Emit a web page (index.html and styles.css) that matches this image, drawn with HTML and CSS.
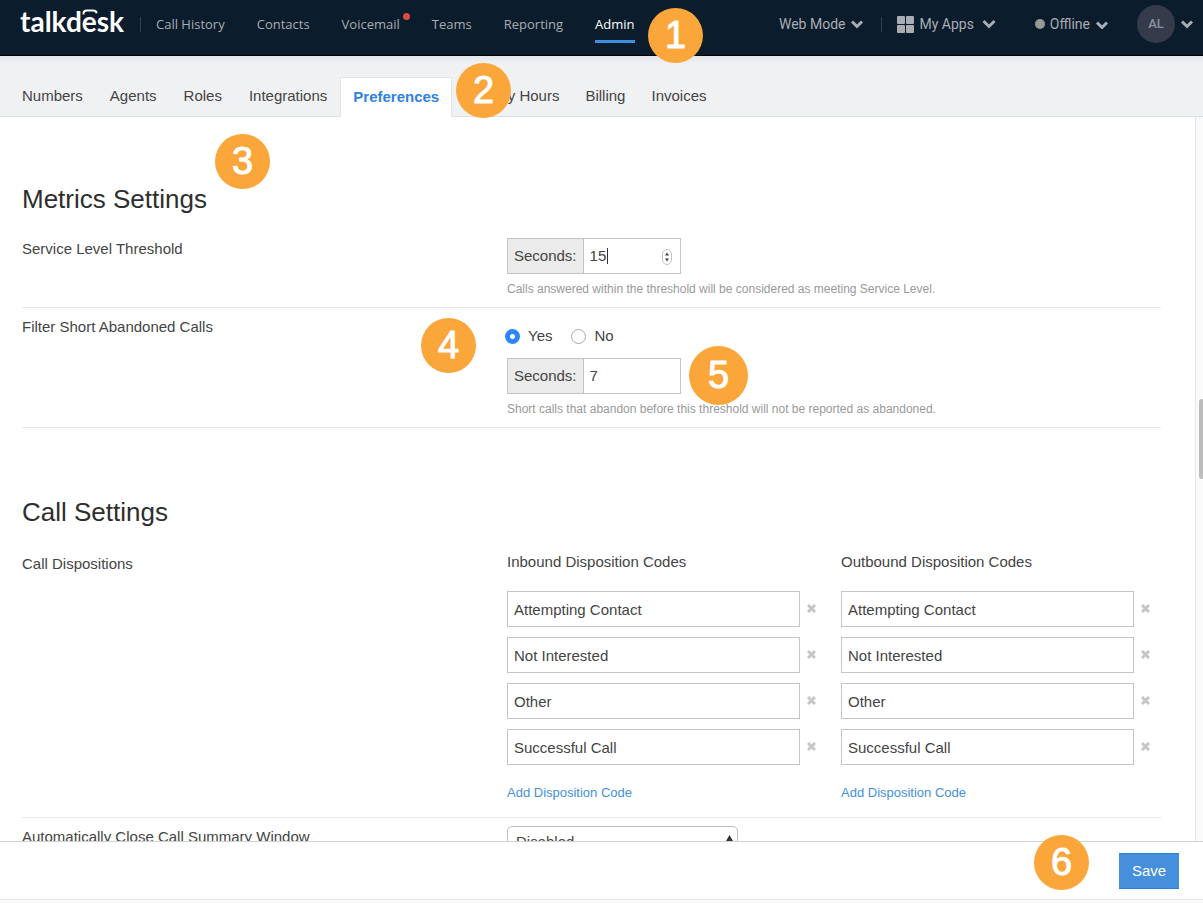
FILE: index.html
```html
<!DOCTYPE html>
<html lang="en">
<head>
    <meta charset="UTF-8">
    <meta name="viewport" content="width=device-width, initial-scale=1.0">
    <title>Talkdesk - Preferences</title>
    <link rel="stylesheet" href="styles.css">
</head>
<body>

<header class="topbar">
    <a class="logo" href="#">talkdesk
        <svg class="logo-arc" width="16" height="7" viewBox="0 0 16 7"><path d="M1.5 5.5V4.2Q1.5 1.5 5 1.5H11Q14.5 1.5 14.5 4.2" fill="none" stroke="#fff" stroke-width="2"/></svg>
    </a>
    <span class="divider"></span>
    <nav class="main-nav">
        <a href="#">Call History</a>
        <a href="#">Contacts</a>
        <a href="#" class="has-dot">Voicemail</a>
        <a href="#">Teams</a>
        <a href="#">Reporting</a>
        <a href="#" class="active">Admin</a>
    </nav>
    <div class="tools">
        <button class="tool" type="button">Web Mode
            <svg class="chevron" width="14" height="10" viewBox="0 0 14 10"><path d="M2 2.5l5 5 5-5"/></svg>
        </button>
        <span class="divider"></span>
        <button class="tool tool-apps" type="button">
            <svg width="17" height="17" viewBox="0 0 17 17" fill="#a9adb3"><rect width="8" height="8" rx="1"/><rect x="9" width="8" height="8" rx="1"/><rect y="9" width="8" height="8" rx="1"/><rect x="9" y="9" width="8" height="8" rx="1"/></svg>
            My Apps
            <svg class="chevron" width="14" height="10" viewBox="0 0 14 10"><path d="M1.500 2l5.500 5.500 5.500-5.500"/></svg>
        </button>
        <button class="tool tool-status" type="button">
            <span class="status-dot"></span>
            Offline
            <svg class="chevron" width="14" height="10" viewBox="0 0 14 10"><path d="M2 3.5l5 5 5-5"/></svg>
        </button>
        <button class="tool tool-user" type="button">
            <span class="avatar">AL</span>
            <svg class="chevron" width="14" height="10" viewBox="0 0 14 10"><path d="M2 2.5l5 5 5-5"/></svg>
        </button>
    </div>
</header>

<nav class="tabs">
    <a href="#">Numbers</a>
    <a href="#">Agents</a>
    <a href="#">Roles</a>
    <a href="#">Integrations</a>
    <a href="#" class="active">Preferences</a>
    <a href="#">Holiday Hours</a>
    <a href="#">Billing</a>
    <a href="#">Invoices</a>
</nav>

<div class="page">
    <main class="content">
        <h2>Metrics Settings</h2>
        <section class="row">
            <label class="row-label" for="threshold">Service Level Threshold</label>
            <div>
                <div class="seconds">
                    <span class="addon">Seconds:</span>
                    <input id="threshold" type="number" value="15">
                    <span class="caret"></span>
                    <svg class="spinner" width="10" height="16" viewBox="0 0 10 16"><rect x=".5" y=".5" width="9" height="15" rx="4.5" fill="#fff" stroke="#c4c4c4"/><path d="M3 6.5L5 3.5l2 3zM3 9.500l2 3 2-3z" fill="#444"/></svg>
                </div>
                <p class="help">Calls answered within the threshold will be considered as meeting Service Level.</p>
            </div>
        </section>
        <section class="row">
            <label class="row-label" for="short-calls">Filter Short Abandoned Calls</label>
            <div>
                <div class="radios">
                    <label><input type="radio" name="filter" checked>Yes</label>
                    <label><input type="radio" name="filter">No</label>
                </div>
                <div class="seconds">
                    <span class="addon">Seconds:</span>
                    <input id="short-calls" type="number" value="7">
                </div>
                <p class="help">Short calls that abandon before this threshold will not be reported as abandoned.</p>
            </div>
        </section>

        <h2 class="next">Call Settings</h2>
        <section class="row row-codes">
            <span class="row-label">Call Dispositions</span>
            <div class="codes">
                <div class="code-list">
                    <h3>Inbound Disposition Codes</h3>
                    <div class="code"><input type="text" aria-label="Inbound code 1" value="Attempting Contact"><button type="button" aria-label="Remove"><svg width="9" height="9" viewBox="0 0 9 9"><path d="M1 1l7 7M8 1L1 8"/></svg></button></div>
                    <div class="code"><input type="text" aria-label="Inbound code 2" value="Not Interested"><button type="button" aria-label="Remove"><svg width="9" height="9" viewBox="0 0 9 9"><path d="M1 1l7 7M8 1L1 8"/></svg></button></div>
                    <div class="code"><input type="text" aria-label="Inbound code 3" value="Other"><button type="button" aria-label="Remove"><svg width="9" height="9" viewBox="0 0 9 9"><path d="M1 1l7 7M8 1L1 8"/></svg></button></div>
                    <div class="code"><input type="text" aria-label="Inbound code 4" value="Successful Call"><button type="button" aria-label="Remove"><svg width="9" height="9" viewBox="0 0 9 9"><path d="M1 1l7 7M8 1L1 8"/></svg></button></div>
                    <a class="add" href="#">Add Disposition Code</a>
                </div>
                <div class="code-list">
                    <h3>Outbound Disposition Codes</h3>
                    <div class="code"><input type="text" aria-label="Outbound code 1" value="Attempting Contact"><button type="button" aria-label="Remove"><svg width="9" height="9" viewBox="0 0 9 9"><path d="M1 1l7 7M8 1L1 8"/></svg></button></div>
                    <div class="code"><input type="text" aria-label="Outbound code 2" value="Not Interested"><button type="button" aria-label="Remove"><svg width="9" height="9" viewBox="0 0 9 9"><path d="M1 1l7 7M8 1L1 8"/></svg></button></div>
                    <div class="code"><input type="text" aria-label="Outbound code 3" value="Other"><button type="button" aria-label="Remove"><svg width="9" height="9" viewBox="0 0 9 9"><path d="M1 1l7 7M8 1L1 8"/></svg></button></div>
                    <div class="code"><input type="text" aria-label="Outbound code 4" value="Successful Call"><button type="button" aria-label="Remove"><svg width="9" height="9" viewBox="0 0 9 9"><path d="M1 1l7 7M8 1L1 8"/></svg></button></div>
                    <a class="add" href="#">Add Disposition Code</a>
                </div>
            </div>
        </section>
        <section class="row">
            <label class="row-label" for="auto-close">Automatically Close Call Summary Window</label>
            <div class="select-wrap">
                <select id="auto-close"><option>Disabled</option></select>
                <svg class="arrows" width="7" height="15" viewBox="0 0 7 15" fill="#333"><path d="M0 6L3.500 0 7 6zM0 9l3.500 6L7 9z"/></svg>
            </div>
        </section>
    </main>
    <div class="track"><span class="thumb"></span></div>
</div>

<footer class="actions">
    <button class="save" type="button">Save</button>
</footer>

<!-- step markers -->
<span class="step step-1">1</span>
<span class="step step-2">2</span>
<span class="step step-3">3</span>
<span class="step step-4">4</span>
<span class="step step-5">5</span>
<span class="step step-6">6</span>

</body>
</html>
```
FILE: styles.css
```css
* {
    box-sizing: border-box;
}
body {
    margin: 0;
    height: 100vh;
    display: flex;
    flex-direction: column;
    position: relative;
    overflow: hidden;
    background: #fff;
    color: #444;
    font: 15px/22px "Liberation Sans", Arial, sans-serif;
}
a {
    text-decoration: none;
    color: inherit;
}
button, input, select {
    font: inherit;
    color: inherit;
}
button {
    background: none;
    border: 0;
    padding: 0;
    cursor: pointer;
}

/* top bar */
.topbar {
    flex: none;
    display: flex;
    align-items: center;
    height: 56px;
    padding: 0 9px 7px 20px;
    background: #0b1c2c;
    border-bottom: 1px solid #000;
    color: #a9adb3;
    font-family: "Open Sans", sans-serif;
    font-size: 13px;
}
.logo {
    position: relative;
    width: 104px;
    padding-bottom: 6px;
    color: #fff;
    font: 700 28px/30px Lato, sans-serif;
}
.logo-arc {
    position: absolute;
    left: 62px;
    top: 3px;
}
.divider {
    width: 1px;
    height: 15px;
    background: #33404d;
}
.topbar > .divider {
    margin: 0 15px 0 16px;
}
.main-nav {
    display: flex;
    gap: 32px;
}
.main-nav a {
    position: relative;
}
.main-nav .active {
    color: #fff;
}
.main-nav .active::after {
    content: "";
    position: absolute;
    left: 0;
    right: 0;
    bottom: -8px;
    height: 3px;
    background: #3f8fe0;
}
.has-dot::after {
    content: "";
    position: absolute;
    right: -10px;
    top: 0;
    width: 7px;
    height: 7px;
    border-radius: 50%;
    background: #dd4a40;
}
.tools {
    display: flex;
    align-items: center;
    margin-left: auto;
    font-family: Roboto, sans-serif;
    font-size: 14px;
}
.tool {
    display: flex;
    align-items: center;
    gap: 5px;
}
.tools .divider {
    margin: 0 15px 0 17px;
}
.tool-apps .chevron {
    margin-left: 3px;
}
.tool-status {
    margin-left: 39px;
}
.tool-user {
    margin-left: 28px;
}
.status-dot {
    width: 10px;
    height: 10px;
    border-radius: 50%;
    background: #989896;
}
.avatar {
    width: 38px;
    height: 38px;
    border-radius: 50%;
    background: #353b4a;
    color: #8b919b;
    font-size: 13px;
    font-weight: 500;
    line-height: 38px;
}
.chevron {
    fill: none;
    stroke: #a9adb3;
    stroke-width: 3;
}

/* section tabs */
.tabs {
    flex: none;
    display: flex;
    align-items: flex-end;
    height: 61px;
    padding-left: 8px;
    background: linear-gradient(#e2e6ea, #f0f1f3 8px);
    box-shadow: inset 0 -1px #dcdfe2;
}
.tabs a {
    padding: 7px 13px 10px 14px;
}
.tabs .active {
    padding: 8px 12px 9px;
    border: 1px solid #e2e4e7;
    border-width: 1px 1px 0 1px;
    background: #fff;
    color: #2f82de;
    font-weight: 700;
}
.tabs .active ~ a {
    padding: 7px 13px 10px;
}

/* settings */
.page {
    flex: 1;
    display: flex;
    min-height: 0;
}
.content {
    flex: 1;
    overflow: hidden;
    padding: 64px 34px 0 22px;
}
h2 {
    margin: 0 0 13px;
    font-size: 26px;
    font-weight: 400;
    line-height: 36px;
    color: #2e2e2e;
}
.next {
    margin: 66px 0 21px;
}
.row {
    display: grid;
    grid-template-columns: 485fr 654fr;
    align-items: start;
    padding: 8px 0 9px;
    border-bottom: 1px solid #e9e9e9;
}
.seconds {
    position: relative;
    display: flex;
    width: 174px;
    height: 36px;
    border: 1px solid #c4c4c4;
}
.addon {
    padding: 6px;
    background: #ebebeb;
    border-right: 1px solid #c4c4c4;
}
.seconds input {
    flex: 1;
    min-width: 0;
    border: 0;
    padding: 0 6px;
    outline: 0;
    appearance: textfield;
}
.caret {
    position: absolute;
    left: 99px;
    top: 9px;
    width: 1px;
    height: 16px;
    background: #333;
}
.spinner {
    position: absolute;
    right: 8px;
    top: 10px;
}
.help {
    margin: 6px 0 0;
    font-size: 12px;
    line-height: 18px;
    color: #999;
}
.radios {
    display: flex;
    gap: 21px;
    padding: 9px 0 11px;
}
.radios label {
    display: flex;
    align-items: center;
    gap: 8px;
}
.radios input {
    appearance: none;
    width: 15px;
    height: 15px;
    margin: 0 0 0 -2px;
    border: 1px solid #ababab;
    border-radius: 50%;
    background: #fff;
}
.radios input:checked {
    border: 5px solid #2d86f7;
}
.row-codes {
    padding: 0 0 13px;
}
.row-codes .row-label {
    padding-top: 2px;
}
.codes {
    display: grid;
    grid-template-columns: 1fr 1fr;
    gap: 14px;
}
.code-list {
    display: flex;
    flex-direction: column;
    gap: 10px;
}
h3 {
    margin: 0 0 8px;
    font-size: 15px;
    font-weight: 400;
}
.code {
    display: flex;
}
.code input {
    flex: 1;
    min-width: 0;
    height: 36px;
    padding: 0 6px;
    border: 1px solid #c4c4c4;
}
.code button {
    width: 27px;
    padding: 0 4px 2px 0;
}
.code svg {
    stroke: #c6c6c6;
    stroke-width: 3;
}
.add {
    margin-top: 7px;
    font-size: 13px;
    color: #4390df;
}
.select-wrap {
    position: relative;
    width: 231px;
}
.select-wrap select {
    width: 100%;
    height: 32px;
    padding: 0 8px;
    border: 1px solid #bdbdbd;
    border-radius: 5px;
    background: #fff;
    appearance: none;
}
.arrows {
    position: absolute;
    right: 5px;
    top: 9px;
}
.track {
    position: relative;
    width: 8px;
    background: #fafafa;
    border-left: 1px solid #e4e4e4;
}
.thumb {
    position: absolute;
    top: 39%;
    right: 0;
    width: 4px;
    height: 80px;
    border-radius: 3px 0 0 3px;
    background: #bcbcbc;
}

/* bottom bar */
.actions {
    flex: none;
    display: flex;
    justify-content: flex-end;
    height: 62px;
    padding: 11px 24px 0;
    border-top: 1px solid #d2d2d2;
    background: linear-gradient(#fff 57px, #e4e4e4 57px, #e4e4e4 58px, #f9f9f9 58px);
}
.save {
    width: 60px;
    height: 36px;
    background: #468fdc;
    border: 1px solid #2a80d6;
    border-width: 1px 0;
    color: #fff;
}

/* numbered step markers over the page */
.step {
    position: absolute;
    width: 55px;
    height: 55px;
    border-radius: 50%;
    background: #faa63a;
    color: #fff;
    font-size: 38px;
    line-height: 54px;
    text-align: center;
    -webkit-text-stroke: 1px #fff;
}
.step-1 {
    left: 648px;
    top: 8px;
}
.step-2 {
    left: 456px;
    top: 63px;
}
.step-3 {
    left: 215px;
    top: 134px;
}
.step-4 {
    left: 421px;
    top: 318px;
}
.step-5 {
    left: 689px;
    top: 346px;
    width: 59px;
    height: 59px;
    line-height: 58px;
}
.step-6 {
    left: 1034px;
    top: 835px;
}
```
